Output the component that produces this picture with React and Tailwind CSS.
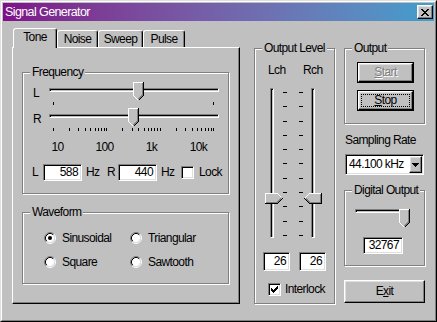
import React from "react";

const raised =
  "border border-t-white border-l-white border-r-black border-b-black shadow-[inset_-1px_-1px_#808080,inset_1px_1px_#dfdfdf]";
const sunken =
  "border border-t-[#808080] border-l-[#808080] border-r-white border-b-white shadow-[inset_1px_1px_#000,inset_-1px_-1px_#dfdfdf]";
const channel =
  "border border-t-[#808080] border-l-[#808080] border-r-white border-b-white shadow-[inset_1px_1px_#000]";

function Group({ title, className, children }) {
  return (
    <div className={`relative border border-[#808080] shadow-[inset_1px_1px_#fff,1px_1px_#fff] ${className}`}>
      <span className="absolute left-[7px] top-[-8px] bg-[#c0c0c0] px-[2px] leading-[15px]">{title}</span>
      {children}
    </div>
  );
}

function ThumbDown({ className }) {
  return (
    <svg width="11" height="19" viewBox="0 0 11 19" className={className} shapeRendering="crispEdges">
      <path d="M0 0H11V13L5.5 18.5L0 13Z" fill="#c0c0c0" />
      <path d="M0.5 13.5V0.5H10" stroke="#fff" fill="none" />
      <path d="M1 14L5 18" stroke="#fff" fill="none" />
      <path d="M10.5 0V13.5L5.5 18.5" stroke="#000" fill="none" />
      <path d="M9.5 1V13L5.5 17" stroke="#808080" fill="none" />
    </svg>
  );
}

function ThumbRight({ className }) {
  return (
    <svg width="18" height="11" viewBox="0 0 18 11" className={className} shapeRendering="crispEdges">
      <path d="M0 0H12L17.5 5.5L12 11H0Z" fill="#c0c0c0" />
      <path d="M0.5 10V0.5H12.5L16.5 4.5" stroke="#fff" fill="none" />
      <path d="M0 10.5H12.5L17.5 5.5" stroke="#000" fill="none" />
      <path d="M1 9.5H12L16 5.5" stroke="#808080" fill="none" />
    </svg>
  );
}

function ThumbLeft({ className }) {
  return (
    <svg width="18" height="11" viewBox="0 0 18 11" className={className} shapeRendering="crispEdges">
      <path d="M5.5 0H18V11H5.5L0 5.5Z" fill="#c0c0c0" />
      <path d="M0.5 5.5L5.5 0.5H17" stroke="#fff" fill="none" />
      <path d="M17.5 0V10.5H5.5L0.5 5.5" stroke="#000" fill="none" />
      <path d="M16.5 1V9.5H6L2 5.5" stroke="#808080" fill="none" />
    </svg>
  );
}

function Radio({ checked }) {
  return (
    <svg width="12" height="12" viewBox="0 0 12 12" className="shrink-0">
      <circle cx="6" cy="6" r="4.2" fill="#fff" />
      <path d="M2.11 9.89A5.5 5.5 0 0 1 9.89 2.11" stroke="#808080" fill="none" />
      <path d="M9.89 2.11A5.5 5.5 0 0 1 2.11 9.89" stroke="#fff" fill="none" />
      <path d="M2.82 9.18A4.5 4.5 0 0 1 9.18 2.82" stroke="#000" fill="none" />
      <path d="M9.18 2.82A4.5 4.5 0 0 1 2.82 9.18" stroke="#dfdfdf" fill="none" />
      {checked && <circle cx="6" cy="6" r="2" fill="#000" />}
    </svg>
  );
}

function Check({ checked }) {
  return (
    <div className={`w-[13px] h-[13px] shrink-0 bg-white flex items-center justify-center ${sunken}`}>
      {checked && (
        <svg width="7" height="7" viewBox="0 0 7 7" shapeRendering="crispEdges">
          <path
            d="M6 0h1v1h-1z M5 1h2v1h-2z M0 2h1v1h-1z M4 2h3v1h-3z M0 3h2v1h-2z M3 3h3v1h-3z M0 4h5v1h-5z M1 5h3v1h-3z M2 6h1v1h-1z"
            fill="#000"
          />
        </svg>
      )}
    </div>
  );
}

function Edit({ value, className }) {
  return (
    <div className={`bg-white flex items-center justify-end pr-[3px] ${sunken} ${className}`}>{value}</div>
  );
}

// log-scale tick positions for 10 Hz .. 10 kHz over 160px
const logTicks = [];
for (let d = 0; d < 3; d++) {
  for (let m = 1; m < 10; m++) logTicks.push(4 + (d + Math.log10(m)) * (160 / 3));
}
logTicks.push(164);

const levelTicks = Array.from({ length: 11 });

export default function App() {
  return (
    <div className="w-[437px] h-[322px] overflow-hidden whitespace-nowrap bg-[#c0c0c0] border border-t-[#dfdfdf] border-l-[#dfdfdf] border-r-black border-b-black text-black text-[12px] tracking-[-0.6px] leading-[15px] font-['Liberation_Sans',Arial,sans-serif]">
      <div className="h-full flex flex-col border border-t-white border-l-white border-r-[#808080] border-b-[#808080] p-[1px]">
        {/* title bar */}
        <div className="h-[18px] shrink-0 flex items-center pl-[2px] bg-linear-to-r from-[#7e0e88] to-[#3d9ecd] text-white text-[12.5px]">
          <span className="flex-1">Signal Generator</span>
          <div className={`w-[16px] h-[14px] mr-[1px] bg-[#c0c0c0] flex items-center justify-center ${raised}`}>
            <svg width="8" height="7" viewBox="0 0 8 7" shapeRendering="crispEdges">
              <path
                d="M0 0h2v1h-2z M6 0h2v1h-2z M1 1h2v1h-2z M5 1h2v1h-2z M2 2h4v1h-4z M3 3h2v1h-2z M2 4h4v1h-4z M1 5h2v1h-2z M5 5h2v1h-2z M0 6h2v1h-2z M6 6h2v1h-2z"
                fill="#000"
              />
            </svg>
          </div>
        </div>

        <div className="flex flex-1">
          {/* tabs */}
          <div className="ml-[9px] mt-[7px] w-[228px] flex flex-col">
            <div className="h-[19px] flex items-end pl-[1px]">
              <div className="relative z-10 mb-[-1px] w-[44px] h-[20px] pb-[2px] bg-[#c0c0c0] rounded-t-[3px] border-t border-l border-r border-t-white border-l-white border-r-black shadow-[inset_-1px_0_#808080] flex items-center justify-center">
                Tone
              </div>
              {[
                ["Noise", "w-[41px]"],
                ["Sweep", "w-[45px]"],
                ["Pulse", "w-[42px]"],
              ].map(([t, w]) => (
                <div
                  key={t}
                  className={`${w} h-[17px] rounded-t-[3px] border-t border-l border-r border-t-white border-l-white border-r-black shadow-[inset_-1px_0_#808080] flex items-center justify-center`}
                >
                  {t}
                </div>
              ))}
            </div>
            <div className="h-[257px] border border-t-white border-l-white border-r-black border-b-black shadow-[inset_-1px_-1px_#808080]">
              <Group title="Frequency" className="ml-[9px] mt-[24px] w-[207px] h-[122px]">
                <div className="mt-[9px] flex">
                  <span className="ml-[10px] w-[16px] pt-[4px]">L</span>
                  <div className="relative w-[170px] h-[19px]">
                    <div className={`mt-[6px] h-[4px] ${channel}`} />
                    <ThumbDown className="absolute top-0 left-[84px]" />
                  </div>
                </div>
                <svg width="170" height="3" className="ml-[26px] mt-[1px] block">
                  <rect x="4" y="0" width="1" height="3" fill="#000" />
                  <rect x="164" y="0" width="1" height="3" fill="#000" />
                </svg>
                <div className="mt-[3px] flex">
                  <span className="ml-[10px] w-[16px] pt-[4px]">R</span>
                  <div className="relative w-[170px] h-[19px]">
                    <div className={`mt-[6px] h-[4px] ${channel}`} />
                    <ThumbDown className="absolute top-0 left-[79px]" />
                  </div>
                </div>
                <svg width="170" height="3" className="ml-[26px] mt-[1px] block">
                  {logTicks.map((x, i) => (
                    <rect key={i} x={Math.round(x)} y="0" width="1" height="3" fill="#000" />
                  ))}
                </svg>
                <div className="mt-[9px] ml-[11px] grid grid-cols-[47px_47px_47px_47px] text-center">
                  <span>10</span>
                  <span>100</span>
                  <span>1k</span>
                  <span>10k</span>
                </div>
                <div className="mt-[9px] flex items-center h-[17px]">
                  <span className="ml-[9px] w-[11px]">L</span>
                  <Edit value="588" className="w-[39px] h-[17px]" />
                  <span className="ml-[4px] w-[21px]">Hz</span>
                  <span className="w-[11px]">R</span>
                  <Edit value="440" className="w-[39px] h-[17px]" />
                  <span className="ml-[4px] w-[20px]">Hz</span>
                  <Check />
                  <span className="ml-[5px]">Lock</span>
                </div>
              </Group>

              <Group title="Waveform" className="ml-[9px] mt-[18px] w-[207px] h-[72px]">
                <div className="ml-[21px] mt-[19px] grid grid-cols-[86px_auto] gap-y-[12px]">
                  {[
                    ["Sinusoidal", true],
                    ["Triangular", false],
                    ["Square", false],
                    ["Sawtooth", false],
                  ].map(([t, c]) => (
                    <div key={t} className="flex items-center gap-[6px] h-[12px]">
                      <Radio checked={c} />
                      <span>{t}</span>
                    </div>
                  ))}
                </div>
              </Group>
            </div>
          </div>

          {/* output level */}
          <Group title="Output Level" className="ml-[14px] mt-[27px] w-[81px] h-[256px]">
            <div className="mt-[14px] ml-[13px] flex">
              <span className="w-[35px]">Lch</span>
              <span>Rch</span>
            </div>
            <div className="relative mt-[10px] h-[150px] flex">
              <div className={`ml-[15px] w-[4px] h-full ${channel}`} />
              <div className="ml-[9px] mt-[4px] w-[4px] h-[144px] flex flex-col justify-between">
                {levelTicks.map((_, i) => (
                  <div key={i} className="h-[1px] bg-black" />
                ))}
              </div>
              <div className="ml-[12px] mt-[4px] w-[4px] h-[144px] flex flex-col justify-between">
                {levelTicks.map((_, i) => (
                  <div key={i} className="h-[1px] bg-black" />
                ))}
              </div>
              <div className={`ml-[8px] w-[4px] h-full ${channel}`} />
              <ThumbRight className="absolute left-[10px] top-[105px]" />
              <ThumbLeft className="absolute left-[49px] top-[105px]" />
            </div>
            <div className="mt-[14px] ml-[8px] flex gap-[9px]">
              <Edit value="26" className="w-[27px] h-[19px]" />
              <Edit value="26" className="w-[27px] h-[19px]" />
            </div>
            <div className="mt-[11px] ml-[13px] flex items-center gap-[4px]">
              <Check checked />
              <span>Interlock</span>
            </div>
          </Group>

          {/* output column */}
          <div className="ml-[9px] mt-[27px] w-[81px] flex flex-col">
            <Group title="Output" className="h-[76px]">
              <div className="ml-[12px] mt-[13px] w-[57px] h-[21px] border border-black flex">
                <div className={`flex-1 flex items-center justify-center text-[#808080] [text-shadow:1px_1px_0_#fff] ${raised}`}>
                  <span>
                    <span className="underline">S</span>tart
                  </span>
                </div>
              </div>
              <div className="ml-[12px] mt-[7px] w-[57px] h-[21px] border border-black flex">
                <div className={`flex-1 flex p-[2px] ${raised}`}>
                  <div className="flex-1 border border-dotted border-black flex items-center justify-center">
                    <span>
                      <span className="underline">S</span>top
                    </span>
                  </div>
                </div>
              </div>
            </Group>
            <span className="mt-[9px] ml-[1px]">Sampling Rate</span>
            <div className={`mt-[6px] ml-[1px] w-[79px] h-[21px] bg-white p-[1px] flex items-center ${sunken}`}>
              <span className="flex-1 pl-[2px]">44.100 kHz</span>
              <div className={`w-[13px] h-[17px] bg-[#c0c0c0] flex items-center justify-center ${raised}`}>
                <svg width="7" height="4" viewBox="0 0 7 4" shapeRendering="crispEdges">
                  <path d="M0 0h7v1h-1v1h-1v1h-1v1h-1v-1h-1v-1h-1v-1h-1z" fill="#000" />
                </svg>
              </div>
            </div>
            <Group title="Digital Output" className="mt-[15px] h-[76px]">
              <div className="relative ml-[10px] mt-[18px] w-[54px] h-[19px]">
                <div className={`mt-[5px] h-[4px] ${channel}`} />
                <ThumbDown className="absolute top-0 left-[44px]" />
              </div>
              <Edit value="32767" className="ml-[18px] mt-[9px] w-[40px] h-[17px]" />
            </Group>
            <div className={`mt-[14px] w-[81px] h-[23px] flex items-center justify-center ${raised}`}>
              <span>
                E<span className="underline">x</span>it
              </span>
            </div>
          </div>
        </div>
      </div>
    </div>
  );
}
